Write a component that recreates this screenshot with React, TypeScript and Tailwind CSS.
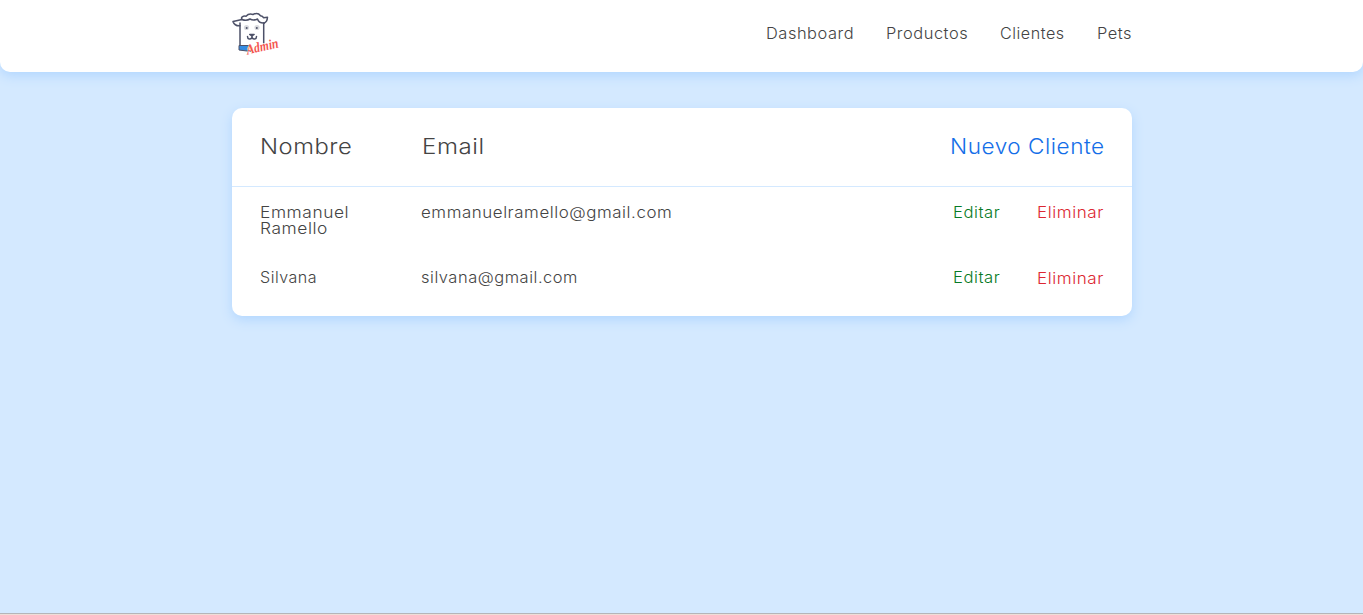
const links = [
  { label: 'Dashboard', width: 'w-[88px]', stretch: 'scale-x-[1.06]' },
  { label: 'Productos', width: 'w-[82px]', stretch: 'scale-x-[1.06]' },
  { label: 'Clientes', width: 'w-[64.5px]', stretch: 'scale-x-[1.04]' },
  { label: 'Pets', width: 'w-[35px]', stretch: 'scale-x-[1.06]' },
];

const clients = [
  { name: 'Emmanuel Ramello', email: 'emmanuelramello@gmail.com', row: 'h-[65px]', remove: '', nameStretch: 'scale-x-[1.12]', emailStretch: 'scale-x-[1.091]' },
  { name: 'Silvana', email: 'silvana@gmail.com', row: 'h-[64px]', remove: 'mt-px', nameStretch: 'scale-x-[1.035]', emailStretch: 'scale-x-[1.062]' },
];

function Logo() {
  return (
    <svg className="h-[50px] w-[54px] shrink-0 overflow-visible" viewBox="0 0 54 50" fill="none" role="img" aria-label="Admin">
      <g stroke="#4d5168" strokeWidth="1.5" strokeLinecap="round" strokeLinejoin="round">
        <path d="M10 7.500 1 9.600c1.200 3 3.600 4.500 7 4.200" />
        <path d="M8 11v23M31.700 11v20" />
        <path d="M10 7.500C8.500 5 11 3.800 14 4.200 16 2 19 1.800 21 2.500c3-1.500 6-.8 7.500 1.200 1.500.3 2.500 1 3 2l4-.4c-.2 3-1.300 5-3.500 6" />
        <path d="M10 7.500c3 1.200 6 .8 8-.5 2.500 1.500 5.500 1 7.500 0 1 3 3.200 4.200 6.500 4" />
        <path d="m17.700 22.500 2.200 1.500 2.200-1.500Z" fill="#4d5168" />
        <path d="M20 24v1.500M15.500 24.500c0 3 3 3.300 4.500 1 1.500 2.300 4.500 2 4.500-1" />
      </g>
      <circle cx="14.500" cy="15.500" r="2.600" fill="#d9dade" />
      <circle cx="25" cy="15.500" r="2.600" fill="#d9dade" />
      <circle cx="14.700" cy="16" r="1" fill="#4d5168" />
      <circle cx="24.800" cy="16" r="1" fill="#4d5168" />
      <path d="M7 33.500h12v6L7 38Z" fill="#348ce2" stroke="#4d5168" />
      <circle cx="18" cy="36.500" r="2.600" fill="#ffd45a" />
      <text x="15.500" y="42.500" transform="rotate(-13 15.500 42.500)" textLength="32.500" lengthAdjust="spacingAndGlyphs" fill="#f4554f" stroke="#fff" strokeWidth="1" paintOrder="stroke" className="font-['Liberation_Serif',serif] text-[14px] font-bold tracking-normal italic">Admin</text>
    </svg>
  );
}

export default function App() {
  return (
    <div className="flex h-[615px] flex-col overflow-hidden bg-[#d4e9ff] font-['Inter',sans-serif] text-[15.500px] leading-4 font-light tracking-[0.5px] text-[#444]">
      <header className="h-[72px] shrink-0 rounded-b-[10px] bg-white shadow-[0_4px_12px_#b3d7ff]">
        <div className="mx-auto flex h-full w-[900px] justify-between pt-3">
          <Logo />
          <nav className="flex gap-8 pt-[14px]">
            {links.map(({ label, width, stretch }) => (
              <a key={label} href="#" className={`whitespace-nowrap ${width}`}>
                <span className={`inline-block origin-left ${stretch}`}>{label}</span>
              </a>
            ))}
          </nav>
        </div>
      </header>

      <main className="mx-auto mt-9 h-[208px] w-[900px] shrink-0 rounded-[10px] bg-white shadow-[0_4px_12px_#b3d7ff]">
        <div className="flex h-[79px] border-b border-[#d4e9ff] px-7 pt-[27px] text-[21.500px] leading-[22px]">
          <h2 className="w-[162px]"><span className="inline-block origin-left scale-x-[1.105]">Nombre</span></h2>
          <h2 className="grow"><span className="inline-block origin-left scale-x-[1.12]">Email</span></h2>
          <a href="#" className="w-[154px] whitespace-nowrap text-[#146ee8]"><span className="inline-block origin-left scale-x-[1.05]">Nuevo Cliente</span></a>
        </div>
        {clients.map(({ name, email, row, remove, nameStretch, emailStretch }) => (
          <div key={email} className={`flex px-7 pt-[18px] ${row}`}>
            <div className="mr-[41.5px] w-[120px]"><div className={`w-[107px] origin-left ${nameStretch}`}>{name}</div></div>
            <div className="grow"><span className={`inline-block origin-left ${emailStretch}`}>{email}</span></div>
            <a href="#" className="mr-9 w-12 whitespace-nowrap text-[#087a25]"><span className="inline-block origin-left scale-x-[1.075]">Editar</span></a>
            <button className={`flex h-4 w-[67px] whitespace-nowrap text-[#dc2732] ${remove}`}><span className="inline-block origin-left scale-x-[1.1]">Eliminar</span></button>
          </div>
        ))}
      </main>
      <footer className="mt-auto h-0.5 shrink-0 border-t border-[#b5b5b9] bg-[#efded8]" />
    </div>
  );
}
